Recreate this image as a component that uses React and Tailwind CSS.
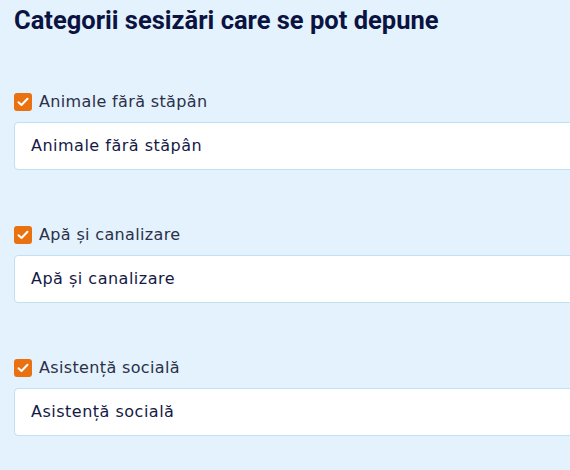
import React from "react";

const items = ["Animale fără stăpân", "Apă și canalizare", "Asistență socială"];

function Check() {
  return (
    <span className="flex h-[18px] w-[18px] shrink-0 items-center justify-center rounded-[3px] bg-[#ea7110]">
      <svg width="12" height="10" viewBox="0 0 12 10" fill="none">
        <path d="M1.5 5.2 L4.5 8 L10.5 1.8" stroke="white" strokeWidth="2" strokeLinecap="round" strokeLinejoin="round" />
      </svg>
    </span>
  );
}

export default function App() {
  return (
    <div className="h-[470px] w-[570px] overflow-hidden bg-[#e3f2fd] pl-[14px]">
      <h1 className="pt-[6px] font-['Roboto',sans-serif] text-[25.5px] font-bold leading-[28px] text-[#0b1341]">
        Categorii sesizări care se pot depune
      </h1>
      <div className="mt-[59px] flex flex-col gap-[56px]">
        {items.map((t) => (
          <div key={t} className="flex flex-col">
            <label className="flex h-[18px] items-center gap-[7px]">
              <Check />
              <span className="font-['DejaVu_Sans',sans-serif] text-[16px] tracking-[0.35px] text-[#2b3047]">{t}</span>
            </label>
            <div className="mt-[11px] flex h-[48px] w-[600px] items-center rounded-[4px] border border-[#bfe0f5] bg-white pl-[16px]">
              <span className="font-['DejaVu_Sans',sans-serif] text-[16px] tracking-[0.5px] text-[#141a45]">{t}</span>
            </div>
          </div>
        ))}
      </div>
    </div>
  );
}
